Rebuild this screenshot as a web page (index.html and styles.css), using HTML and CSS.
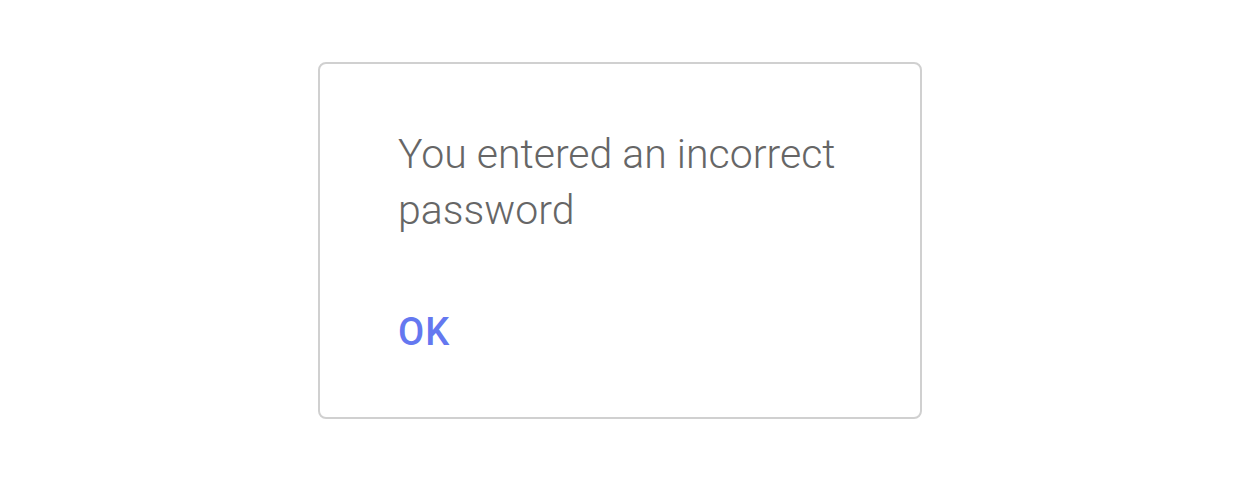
FILE: index.html
```html
<!DOCTYPE html>
<html lang="en">
<head>
  <meta charset="UTF-8" />
  <title>Incorrect password</title>
  <link rel="stylesheet" href="styles.css">
</head>
<body>

  <!-- Alert dialog -->
  <div class="dialog">
    <p class="message">You entered an incorrect password</p>
    <div class="actions">
      <button class="btn-ok">OK</button>
    </div>
  </div>

</body>
</html>
```

FILE: styles.css
```css
body {
  margin: 0;
  background: #fff;
  font-family: Roboto, "Noto Sans", sans-serif;
  display: flex;
  justify-content: center;
  padding-top: 62px;
}

.dialog {
  width: 604px;
  height: 357px;
  border: 2px solid #d0d0d0;
  border-radius: 8px;
  box-sizing: border-box;
  padding: 62px 50px 0 78px;
}

.message {
  margin: 0;
  font-weight: 300;
  font-size: 41px;
  line-height: 56px;
  color: #666;
}

.actions {
  margin-top: 75px;
}

.btn-ok {
  display: block;
  background: none;
  border: none;
  padding: 0;
  font-family: Roboto, sans-serif;
  font-weight: 500;
  font-size: 38px;
  line-height: 38px;
  letter-spacing: 1px;
  color: #6478f0;
  cursor: pointer;
}
```
